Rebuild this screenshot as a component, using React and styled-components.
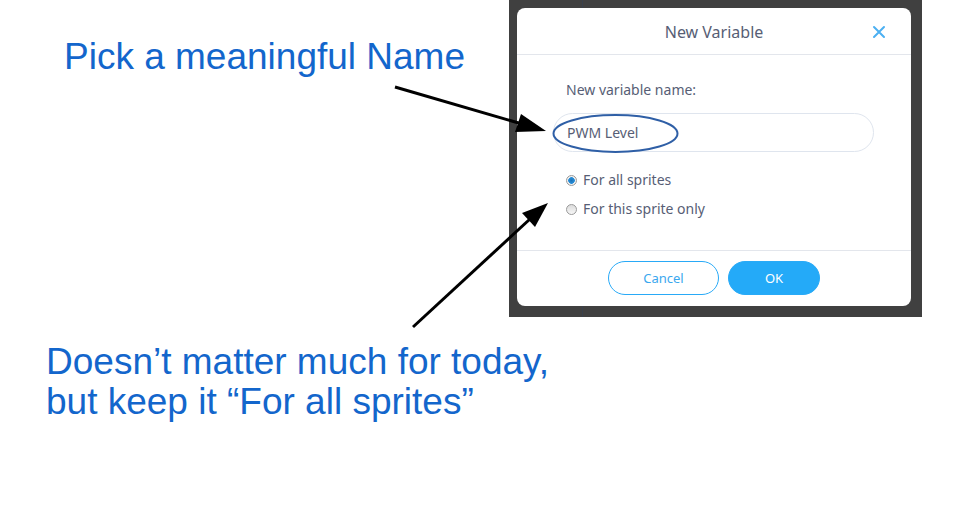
import React from 'react';
import styled, { createGlobalStyle } from 'styled-components';

const GlobalStyle = createGlobalStyle`
  html, body {
    margin: 0;
    padding: 0;
    background: #ffffff;
  }
`;

const Page = styled.div`
  position: relative;
  width: 972px;
  height: 506px;
  display: grid;
  grid-template-columns: 509px 413px;
  grid-template-rows: 317px auto;
  font-family: 'Liberation Sans', Arial, sans-serif;
  overflow: hidden;
`;

const Note = styled.div`
  color: #1366cc;
  font-size: 37px;
  line-height: 40px;
  white-space: nowrap;
  padding: ${(p) => p.$pad};
  grid-column: ${(p) => p.$span || 'auto'};
`;

// dark editor backdrop behind the dialog, with the faint column line
const DarkPanel = styled.div`
  background:
    linear-gradient(to right, transparent 73px, #39404c 73px, #39404c 74px, transparent 74px),
    #404040;
  padding: 8px 11px 11px 8px;
  display: flex;
`;

const Dialog = styled.div`
  flex: 1;
  background: #fff;
  border-radius: 8px;
  display: flex;
  flex-direction: column;
  font-family: 'Noto Sans', 'Open Sans', sans-serif;
  color: #575e75;
`;

const Header = styled.div`
  box-sizing: border-box;
  height: 47px;
  padding-top: 2px;
  border-bottom: 1px solid #e3e6ec;
  display: flex;
  align-items: center;
  justify-content: center;
  position: relative;
`;

const Title = styled.div`
  font-size: 16px;
  color: #575e75;
`;

const Close = styled.svg`
  position: absolute;
  right: 25px;
  top: 17px;
`;

const Body = styled.div`
  flex: 1;
  padding: 25px 37px 0 36px;
  display: flex;
  flex-direction: column;
`;

const Label = styled.div`
  font-size: 14px;
  line-height: 20px;
  padding-left: 13px;
`;

const Input = styled.div`
  margin-top: 13px;
  height: 37px;
  border: 1px solid #dfe5ee;
  border-radius: 20px;
  display: flex;
  align-items: center;
  padding-left: 13px;
  font-size: 14px;
`;

const Options = styled.div`
  margin-top: 18px;
  display: flex;
  flex-direction: column;
  gap: 9px;
  padding-left: 13px;
`;

const Option = styled.label`
  display: flex;
  align-items: center;
  gap: 6px;
  font-size: 14px;
  line-height: 20px;
`;

const Radio = styled.span`
  width: 11px;
  height: 11px;
  box-sizing: border-box;
  border-radius: 50%;
  border: 1px solid #9a9a9a;
  background: ${(p) =>
    p.$checked
      ? 'radial-gradient(circle, #1a72b8 0, #2a8fd8 3px, #f0f0f0 3.6px)'
      : 'linear-gradient(#dcdcdc, #f6f6f6)'};
`;

const Footer = styled.div`
  border-top: 1px solid #e3e6ec;
  padding: 10px 0 11px;
  display: flex;
  justify-content: center;
  gap: 9px;
`;

const Button = styled.button`
  height: 34px;
  width: ${(p) => p.$w}px;
  border-radius: 17px;
  border: 1px solid #29aaf7;
  background: ${(p) => (p.$primary ? '#24aaf8' : '#fff')};
  color: ${(p) => (p.$primary ? '#fff' : '#3aa7ee')};
  font-family: 'Noto Sans', 'Open Sans', sans-serif;
  font-size: 13px;
  padding: 0;
`;

// annotation layer: arrows and the circle drawn over the screenshot
const Overlay = styled.svg`
  position: absolute;
  left: 0;
  top: 0;
  pointer-events: none;
`;

export default function App() {
  return (
    <>
      <GlobalStyle />
      <Page>
        <Note $pad="37px 0 0 64px">Pick a meaningful Name</Note>
        <DarkPanel>
          <Dialog>
            <Header>
              <Title>New Variable</Title>
              <Close width="14" height="14" viewBox="0 0 14 14">
                <path d="M2 2 L12 12 M12 2 L2 12" stroke="#4cb0f2" strokeWidth="2" strokeLinecap="round" />
              </Close>
            </Header>
            <Body>
              <Label>New variable name:</Label>
              <Input>PWM Level</Input>
              <Options>
                <Option>
                  <Radio $checked />
                  For all sprites
                </Option>
                <Option>
                  <Radio />
                  For this sprite only
                </Option>
              </Options>
            </Body>
            <Footer>
              <Button $w={111}>Cancel</Button>
              <Button $w={92} $primary>OK</Button>
            </Footer>
          </Dialog>
        </DarkPanel>
        <Note $pad="25px 0 0 46px" $span="1 / -1">
          Doesn’t matter much for today,
          <br />
          but keep it “For all sprites”
        </Note>
        <Overlay width="972" height="506">
          <ellipse cx="615.5" cy="133.5" rx="62" ry="18.5" fill="none" stroke="#2f5fa6" strokeWidth="2" />
          <line x1="395" y1="87" x2="522" y2="124" stroke="#000" strokeWidth="3" />
          <polygon points="546,131 515,132 521,114" fill="#000" />
          <line x1="413" y1="327" x2="530" y2="219" stroke="#000" strokeWidth="3" />
          <polygon points="548,203 535,227 522,213" fill="#000" />
        </Overlay>
      </Page>
    </>
  );
}
